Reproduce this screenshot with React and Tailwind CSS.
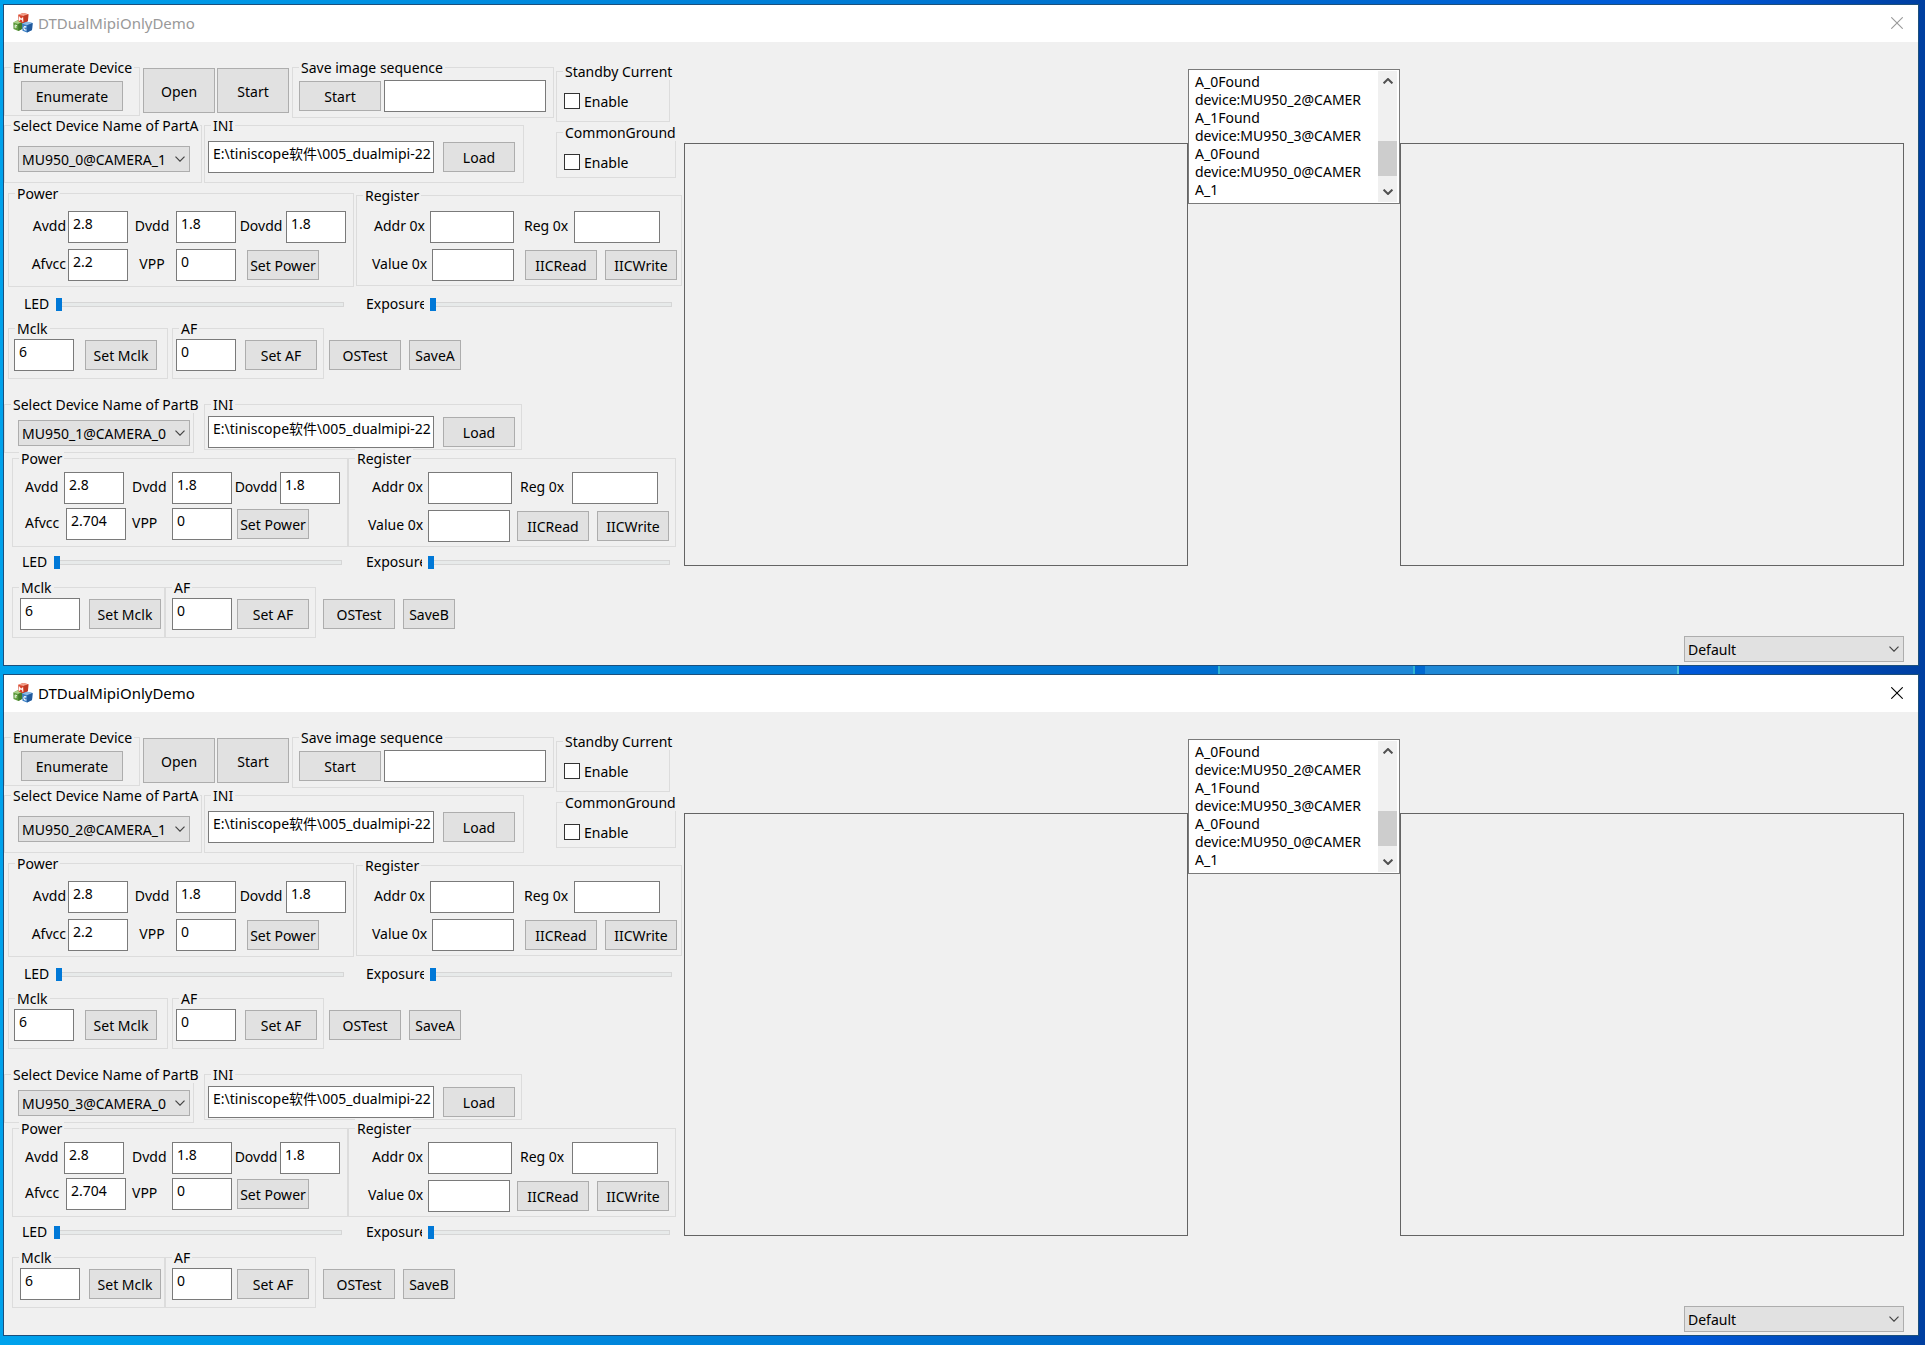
import React from "react";

const buttonBase =
  "flex shrink-0 items-center justify-center whitespace-nowrap border border-[#adadad] bg-[#e1e1e1] pt-[2px] leading-[18px]";

function PushButton({ size = "h-[30px] w-[72px]", className = "", children }) {
  return (
    <button type="button" className={`${buttonBase} ${size} ${className}`}>
      {children}
    </button>
  );
}

function TextBox({ label, value = "", width = "w-[60px]", id }) {
  return (
    <input
      id={id}
      type="text"
      aria-label={label}
      defaultValue={value}
      className={`h-8 shrink-0 rounded-none border border-[#7a7a7a] bg-white pr-[2px] pb-2 pl-1 leading-[18px] outline-none ${width}`}
    />
  );
}

function Field({ id, label, labelClass, width, value }) {
  return (
    <>
      <label htmlFor={id} className={`shrink-0 whitespace-nowrap pb-[2px] leading-[18px] ${labelClass}`}>
        {label}
      </label>
      <TextBox id={id} value={value} width={width} />
    </>
  );
}

function Group({ title, className = "", children }) {
  return (
    <fieldset className={`min-w-0 shrink-0 border border-[#dcdcdc] ${className}`}>
      <legend className="ml-[6px] whitespace-nowrap bg-[#f0f0f0] px-[2px] pt-[2px] leading-4">{title}</legend>
      {children}
    </fieldset>
  );
}

function Chevron({ className }) {
  return (
    <svg viewBox="0 0 10 6" className={className} fill="none" stroke="#444" strokeWidth="1.2" aria-hidden="true">
      <path d="M0.5 0.7 L5 5.2 L9.5 0.7" />
    </svg>
  );
}

function Combo({ label, value, className }) {
  return (
    <div className={`relative h-[26px] ${className}`}>
      <select
        aria-label={label}
        className="h-full w-full appearance-none rounded-none border border-[#adadad] bg-[#e1e1e1] pt-[2px] pr-[22px] pl-[3px] leading-[18px] outline-none"
      >
        <option>{value}</option>
      </select>
      <Chevron className="pointer-events-none absolute top-[10px] right-[5px] h-[6px] w-[10px]" />
    </div>
  );
}

function Slider({ label, className }) {
  return (
    <input
      type="range"
      min="0"
      max="100"
      defaultValue="0"
      aria-label={label}
      className={`h-[13px] shrink-0 appearance-none bg-transparent [&::-webkit-slider-runnable-track]:h-[5px] [&::-webkit-slider-runnable-track]:border [&::-webkit-slider-runnable-track]:border-[#d6d6d6] [&::-webkit-slider-runnable-track]:bg-[#e7eaea] [&::-webkit-slider-thumb]:-mt-[5px] [&::-webkit-slider-thumb]:-ml-px [&::-webkit-slider-thumb]:h-[13px] [&::-webkit-slider-thumb]:w-[6px] [&::-webkit-slider-thumb]:appearance-none [&::-webkit-slider-thumb]:bg-[#0078d7] ${className}`}
    />
  );
}

function EnableBox({ id }) {
  return (
    <div className="flex items-center gap-1 pt-3 pl-[7px]">
      <input id={id} type="checkbox" className="size-4 appearance-none border border-[#333] bg-white checked:bg-[#0078d7]" />
      <label htmlFor={id} className="pt-[2px] leading-4">
        Enable
      </label>
    </div>
  );
}

function Logo() {
  return (
    <svg viewBox="0 0 20 20" className="size-5 shrink-0" aria-hidden="true">
      <path d="M0.3 9.4 L4.6 7.2 L9.6 9 L9.4 15.8 L5.4 18 L0.5 16Z" fill="#5d9a3c" />
      <path d="M0.3 9.4 L4.6 7.2 L9.6 9 L5.2 11Z" fill="#a9cf86" />
      <path d="M5.2 11 L9.6 9 L9.4 15.8 L5.4 18Z" fill="#3f7a2a" />
      <path d="M5.2 1.8 L10.2 0 L15.4 1.2 L14.9 8 L10.4 10.4 L5.7 8.6Z" fill="#d9452c" />
      <path d="M5.2 1.8 L10.2 0 L15.4 1.2 L10.6 3.1Z" fill="#f2a08c" />
      <path d="M10.6 3.1 L15.4 1.2 L14.9 8 L10.4 10.4Z" fill="#c03a24" />
      <path d="M9 10.6 L14.2 8.8 L19.6 10 L19 17 L14 19.6 L9.5 17.8Z" fill="#3a7fc4" />
      <path d="M9 10.6 L14.2 8.8 L19.6 10 L14.2 12.2Z" fill="#8dbbe4" />
      <path d="M14.2 12.2 L19.6 10 L19 17 L14 19.6Z" fill="#225a9c" />
      <path d="M6.5 7.8 L6.6 4.6 L8.1 6.5 L9.6 5.1 L9.8 8.8" fill="none" stroke="#fff" strokeWidth="1.1" />
      <path d="M2.2 15.2 L2.1 12 L4.1 12.7 M2.2 13.7 L3.8 14.1" fill="none" stroke="#e4f2d8" strokeWidth="1" />
      <path d="M13.3 14.2 C11.6 13 10.8 14 10.9 15.2 C11 16.7 12.3 17.4 13.4 16.7" fill="none" stroke="#fff" strokeWidth="1.1" />
    </svg>
  );
}

const INI_PATH = "E:\\tiniscope软件\\005_dualmipi-2211";

function PartA({ prefix }) {
  return (
    <>
      <div className="mt-px flex items-start gap-[2px] pl-1">
        <Group title="Power" className="h-[103px] w-[346px]">
          <div className="flex flex-col gap-[6px] pt-[9px]">
            <div className="flex items-center">
              <Field id={`${prefix}-avdd`} label="Avdd" value="2.8" labelClass="w-[59px] pr-[2px] text-right" />
              <Field id={`${prefix}-dvdd`} label="Dvdd" value="1.8" labelClass="w-12 text-center" />
              <Field id={`${prefix}-dovdd`} label="Dovdd" value="1.8" labelClass="w-[50px] text-center" />
            </div>
            <div className="flex items-center">
              <Field id={`${prefix}-afvcc`} label="Afvcc" value="2.2" labelClass="w-[59px] pr-[2px] text-right" />
              <Field id={`${prefix}-vpp`} label="VPP" value="0" labelClass="w-12 text-center" />
              <PushButton className="ml-[11px]">Set Power</PushButton>
            </div>
          </div>
        </Group>
        <Group title="Register" className="mt-[2px] h-[100px] w-[326px]">
          <div className="flex flex-col gap-[6px] pt-[7px]">
            <div className="flex items-center">
              <Field id={`${prefix}-addr`} label="Addr 0x" width="w-[84px]" labelClass="w-[73px] pl-[17px]" />
              <Field id={`${prefix}-reg`} label="Reg 0x" width="w-[86px]" labelClass="w-[60px] pl-[10px]" />
            </div>
            <div className="flex items-center">
              <Field id={`${prefix}-value`} label="Value 0x" width="w-[82px]" labelClass="w-[75px] pl-[15px]" />
              <PushButton className="ml-[11px]">IICRead</PushButton>
              <PushButton className="ml-2">IICWrite</PushButton>
            </div>
          </div>
        </Group>
      </div>
      <div className="mt-2 flex items-center leading-[18px]">
        <span className="w-[52px] pl-5">LED</span>
        <Slider label="LED A" className="w-[288px]" />
        <span className="ml-[22px] w-[58px] overflow-hidden">Exposure</span>
        <Slider label="Exposure A" className="ml-[6px] w-[242px]" />
      </div>
      <div className="mt-[6px] flex items-start pl-1">
        <Group title="Mclk" className="h-[60px] w-40">
          <div className="flex items-center gap-[11px] pt-[2px] pl-[5px]">
            <TextBox label="Mclk A" value="6" />
            <PushButton>Set Mclk</PushButton>
          </div>
        </Group>
        <Group title="AF" className="ml-1 h-[60px] w-[152px]">
          <div className="flex items-center gap-[9px] pt-[2px] pl-[3px]">
            <TextBox label="AF A" value="0" />
            <PushButton>Set AF</PushButton>
          </div>
        </Group>
        <div className="flex gap-2 pt-[21px] pl-[5px]">
          <PushButton>OSTest</PushButton>
          <PushButton size="h-[30px] w-[52px]">SaveA</PushButton>
        </div>
      </div>
    </>
  );
}

function PartB({ prefix, device }) {
  return (
    <>
      <div className="mt-4 flex items-start gap-[10px]">
        <Group title="Select Device Name of PartB" className="h-[58px] w-[190px]">
          <div className="pt-[7px] pl-[13px]">
            <Combo label="Device of part B" value={device} className="w-[172px]" />
          </div>
        </Group>
        <Group title="INI" className="h-[55px] w-[318px]">
          <div className="flex items-center gap-[9px] pt-[3px] pl-[3px]">
            <TextBox label="INI B" value={INI_PATH} width="w-[226px]" />
            <PushButton>Load</PushButton>
          </div>
        </Group>
      </div>
      <div className="-mt-1 flex items-start pl-2">
        <Group title="Power" className="h-[98px] w-[336px]">
          <div className="flex flex-col gap-1 pt-[5px]">
            <div className="flex items-center">
              <Field id={`${prefix}-avdd`} label="Avdd" value="2.8" labelClass="w-[51px] pl-3" />
              <Field id={`${prefix}-dvdd`} label="Dvdd" value="1.8" labelClass="w-12 pl-2" />
              <Field id={`${prefix}-dovdd`} label="Dovdd" value="1.8" labelClass="w-12 text-center" />
            </div>
            <div className="flex items-center">
              <Field id={`${prefix}-afvcc`} label="Afvcc" value="2.704" labelClass="w-[53px] pl-3" />
              <Field id={`${prefix}-vpp`} label="VPP" value="0" labelClass="w-[46px] pl-[6px]" />
              <PushButton className="ml-[5px]">Set Power</PushButton>
            </div>
          </div>
        </Group>
        <Group title="Register" className="h-[98px] w-[328px]">
          <div className="flex flex-col gap-[6px] pt-[5px]">
            <div className="flex items-center">
              <Field id={`${prefix}-addr`} label="Addr 0x" width="w-[84px]" labelClass="w-[79px] pl-[23px]" />
              <Field id={`${prefix}-reg`} label="Reg 0x" width="w-[86px]" labelClass="w-[60px] pl-2" />
            </div>
            <div className="flex items-center">
              <Field id={`${prefix}-value`} label="Value 0x" width="w-[82px]" labelClass="w-[79px] pl-[19px]" />
              <PushButton className="ml-[7px]">IICRead</PushButton>
              <PushButton className="ml-2">IICWrite</PushButton>
            </div>
          </div>
        </Group>
      </div>
      <div className="mt-[6px] flex items-center leading-[18px]">
        <span className="w-[50px] pl-[18px]">LED</span>
        <Slider label="LED B" className="w-[288px]" />
        <span className="ml-6 w-14 overflow-hidden">Exposure</span>
        <Slider label="Exposure B" className="ml-[6px] w-[242px]" />
      </div>
      <div className="mt-[7px] flex items-start pl-2">
        <Group title="Mclk" className="h-[60px] w-[153px]">
          <div className="flex items-center gap-[9px] pt-[2px] pl-[7px]">
            <TextBox label="Mclk B" value="6" />
            <PushButton>Set Mclk</PushButton>
          </div>
        </Group>
        <Group title="AF" className="h-[60px] w-[151px]">
          <div className="flex items-center gap-[5px] pt-[2px] pl-[6px]">
            <TextBox label="AF B" value="0" />
            <PushButton>Set AF</PushButton>
          </div>
        </Group>
        <div className="flex gap-2 pt-[21px] pl-[7px]">
          <PushButton>OSTest</PushButton>
          <PushButton size="h-[30px] w-[52px]">SaveB</PushButton>
        </div>
      </div>
    </>
  );
}

const LOG = [
  "A_0Found",
  "device:MU950_2@CAMER",
  "A_1Found",
  "device:MU950_3@CAMER",
  "A_0Found",
  "device:MU950_0@CAMER",
  "A_1",
].join("\n");

function LogBox() {
  return (
    <div className="mt-[27px] flex h-[135px] w-[212px] shrink-0 border border-[#7a7a7a] bg-white py-px pr-[2px] pl-px">
      <textarea
        readOnly
        aria-label="Device log"
        defaultValue={LOG}
        className="min-w-0 flex-1 resize-none overflow-hidden whitespace-pre pt-[2px] pl-[5px] leading-[18px] outline-none"
      />
      <div className="flex w-[19px] flex-col items-center bg-[#f0f0f0]">
        <button type="button" aria-label="Scroll up" className="flex h-5 w-full items-center justify-center">
          <svg viewBox="0 0 10 6" className="h-[6px] w-[10px]" fill="none" stroke="#505050" strokeWidth="2" aria-hidden="true">
            <path d="M0.6 5.4 L5 1 L9.4 5.4" />
          </svg>
        </button>
        <div className="flex w-full flex-1 flex-col justify-end pb-[5px]">
          <div className="h-[35px] w-full bg-[#cdcdcd]" />
        </div>
        <button type="button" aria-label="Scroll down" className="flex h-[21px] w-full items-center justify-center">
          <svg viewBox="0 0 10 6" className="h-[6px] w-[10px]" fill="none" stroke="#505050" strokeWidth="2" aria-hidden="true">
            <path d="M0.6 0.6 L5 5 L9.4 0.6" />
          </svg>
        </button>
      </div>
    </div>
  );
}

function DemoWindow({ prefix, active, deviceA, deviceB }) {
  return (
    <section className="border border-[#1c4f7c] bg-[#f0f0f0] text-[14px] text-black">
      <header className="flex h-[37px] items-center bg-white pr-[15px] pb-px pl-[9px]">
        <Logo />
        <h1 className={`ml-[5px] flex-1 text-[15px] ${active ? "text-black" : "text-[#999]"}`}>DTDualMipiOnlyDemo</h1>
        <button type="button" aria-label="Close" className={active ? "text-black" : "text-[#999]"}>
          <svg viewBox="0 0 12 12" className="size-3" fill="none" stroke="currentColor" strokeWidth="1.1" aria-hidden="true">
            <path d="M0.3 0.3 L11.7 11.7 M11.7 0.3 L0.3 11.7" />
          </svg>
        </button>
      </header>
      <div className="flex">
        <div className="w-[680px] shrink-0 pb-[27px]">
          <div className="flex items-start pt-4">
            <div className="flex w-[552px] shrink-0 flex-col">
              <div className="flex items-start">
                <Group title="Enumerate Device" className="h-[58px] w-[136px]">
                  <div className="pt-[5px] pl-4">
                    <PushButton size="h-[30px] w-[102px]">Enumerate</PushButton>
                  </div>
                </Group>
                <div className="flex gap-[2px] px-[3px] pt-[10px]">
                  <PushButton size="h-[45px] w-[72px]">Open</PushButton>
                  <PushButton size="h-[45px] w-[72px]">Start</PushButton>
                </div>
                <Group title="Save image sequence" className="h-[60px] w-[262px]">
                  <div className="flex items-center gap-[3px] pt-1 pl-[6px]">
                    <PushButton size="h-[30px] w-[82px]">Start</PushButton>
                    <TextBox label="Image sequence" width="w-[162px]" />
                  </div>
                </Group>
              </div>
              <div className="-mt-[2px] flex items-start gap-[2px]">
                <Group title="Select Device Name of PartA" className="h-[67px] w-[198px]">
                  <div className="pt-3 pl-[13px]">
                    <Combo label="Device of part A" value={deviceA} className="w-[172px]" />
                  </div>
                </Group>
                <Group title="INI" className="h-[67px] w-[320px]">
                  <div className="flex items-center gap-[9px] pt-[7px] pl-[3px]">
                    <TextBox label="INI A" value={INI_PATH} width="w-[226px]" />
                    <PushButton>Load</PushButton>
                  </div>
                </Group>
              </div>
            </div>
            <div className="flex flex-col gap-px pt-1">
              <Group title="Standby Current" className="h-[60px] w-[114px]">
                <EnableBox id={`${prefix}-standby`} />
              </Group>
              <Group title="CommonGround" className="h-[55px] w-[120px]">
                <EnableBox id={`${prefix}-ground`} />
              </Group>
            </div>
          </div>
          <PartA prefix={`${prefix}-a`} />
          <PartB prefix={`${prefix}-b`} device={deviceB} />
        </div>
        <main className="flex min-w-0 flex-1 flex-col pr-[14px] pb-[3px]">
          <div className="flex min-h-0 flex-1 items-stretch">
            <div className="mt-[101px] flex-1 border border-[#646464]" />
            <LogBox />
            <div className="mt-[101px] flex-1 border border-[#646464]" />
          </div>
          <Combo label="Mode" value="Default" className="mt-[70px] w-[220px] self-end" />
        </main>
      </div>
    </section>
  );
}

export default function App() {
  return (
    <div className="min-h-screen bg-[linear-gradient(to_right,#00a2ec,#0082d9_36%,#0070cc_60%,#0058d8_88%,#003fa0)] pt-1 pr-[6px] pb-[9px] pl-[3px] font-['Noto_Sans','Noto_Sans_CJK_SC',sans-serif]">
      <DemoWindow prefix="w1" active={false} deviceA="MU950_0@CAMERA_1" deviceB="MU950_1@CAMERA_0" />
      <div className="flex h-2">
        <div className="w-[63.4%]" />
        <div className="w-[10.3%] border-x-2 border-[#30b4d0] bg-[#1e88d6]" />
        <div className="w-[0.5%] bg-[#0068d0]" />
        <div className="w-[13.3%] border-r-2 border-[#4cc4d4] bg-[#1e88d6]" />
      </div>
      <DemoWindow prefix="w2" active deviceA="MU950_2@CAMERA_1" deviceB="MU950_3@CAMERA_0" />
    </div>
  );
}
